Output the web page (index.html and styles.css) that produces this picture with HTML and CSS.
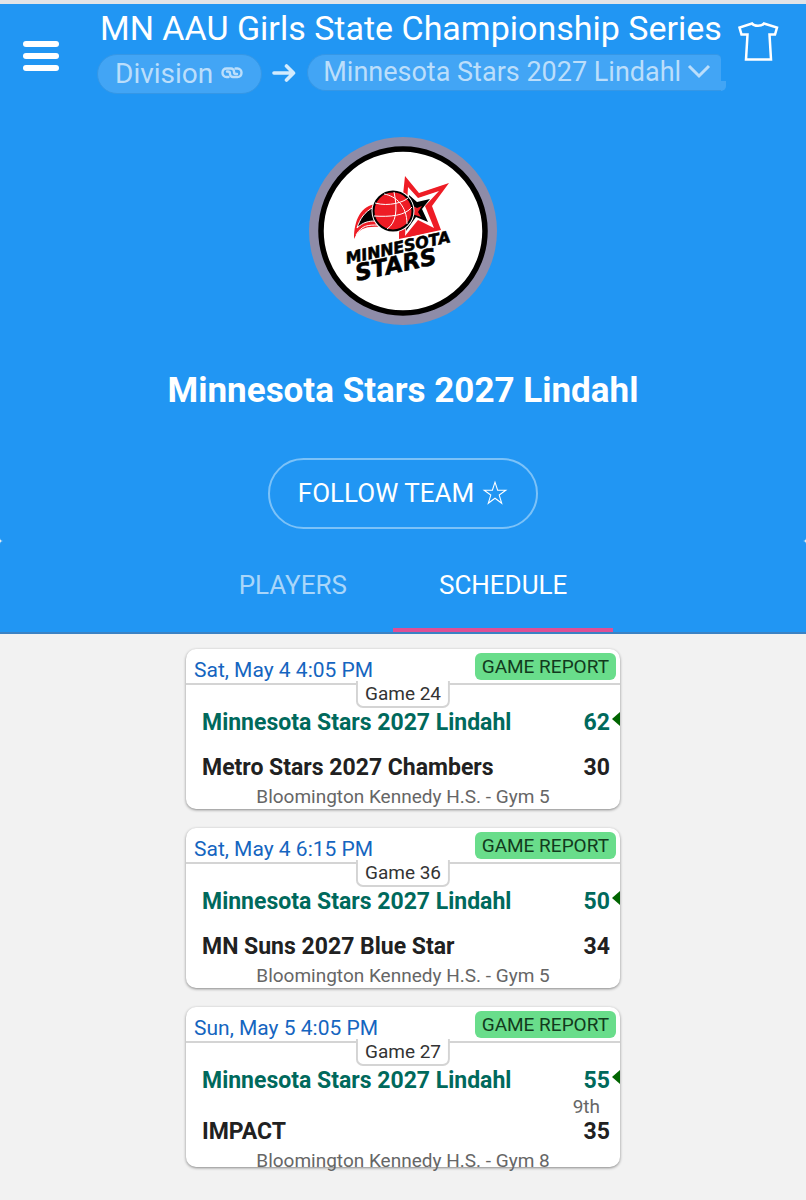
FILE: index.html
```html
<!DOCTYPE html>
<html lang="en">
	<head>
		<meta charset="UTF-8">
		<meta name="viewport" content="width=device-width, initial-scale=1">
		<title>Minnesota Stars 2027 Lindahl</title>
		<link rel="stylesheet" href="styles.css">
	</head>
	<body>
		<header class="hero">
			<div class="topbar">
				<button class="menu" type="button" aria-label="Menu"><span></span><span></span><span></span></button>
				<div class="heading">
					<div class="event">MN AAU Girls State Championship Series</div>
					<div class="crumbs">
						<a class="pill division" href="#">Division
							<svg width="22" height="14" viewBox="0 0 22 14" fill="none" stroke="currentColor" stroke-width="2.4" stroke-linecap="round"><path d="M7.500 11H5.500a4 4 0 0 1-4-4.200C1.500 3.800 3 2.500 5.500 2.500H10a3 3 0 0 1 3 3v0.500a2 2 0 0 0 2 2h1"/><path d="M14.500 2.500h2a4 4 0 0 1 4 4.200c0 2.800-1.500 4.300-4 4.300H12a3 3 0 0 1-3-3V7.500a2 2 0 0 0-2-2H6"/></svg>
						</a>
						<svg class="arrow" width="24" height="18" viewBox="0 0 24 18" fill="none" stroke="currentColor" stroke-width="3.600" stroke-linecap="round" stroke-linejoin="round"><path d="M2 9h19M14.500 2l7 7-7 7"/></svg>
						<div class="teampick">
							<select class="pill" aria-label="Team"><option>Minnesota Stars 2027 Lindahl</option></select>
							<svg class="chevron" width="24" height="16" viewBox="0 0 24 16" fill="none" stroke="currentColor" stroke-width="3"><path d="M2 3l10 10L22 3"/></svg>
						</div>
					</div>
				</div>
				<button class="shirt" type="button" aria-label="Team gear">
					<svg width="42" height="42" viewBox="0 0 42 42" fill="none" stroke="currentColor" stroke-width="2.500"><path d="M15 3.500C17 6.500 25 6.500 27 3.500L40 7.500 38 14.500H32.500L34 39.500H9L10.500 14.500H4.500L2.500 7.500Z"/></svg>
				</button>
			</div>
			<svg class="logo" width="188" height="188" viewBox="0 0 188 188" role="img" aria-label="Minnesota Stars logo">
				<circle cx="94" cy="94" r="94" fill="#8e8ca8"/>
				<circle cx="94" cy="94" r="82" fill="#fff" stroke="#000" stroke-width="5.500"/>
				<path d="M96 39L110 56 140 46 123 69 132 93 90 102V96Z" fill="#ee1c25"/>
				<path d="M99 50L109 61 130 54 116 69 125 91 109 83 96 99Z" fill="#fff"/>
				<path d="M100 58L108 65 121 62 113 72 119 85 107 80 97 94Z" fill="#000"/>
				<path d="M104 69L108 71 113 69 109 75 112 80 103 77Z" fill="#ee1c25"/>
				<path d="M99 100L109 87 124 94Z" fill="#ee1c25"/>
				<path d="M68 67C52 68 45 83 45 102C50 91 57 89 72 90Z" fill="#ee1c25"/>
				<path d="M65 70C55 75 51 82 48 91C54 85 60 84 66 84Z" fill="#000" stroke="#fff"/>
				<path d="M47 98C53 88 59 88 69 88" fill="none" stroke="#fff"/>
				<circle cx="84" cy="74" r="21.500" fill="#fff"/>
				<circle cx="84" cy="74" r="19.500" fill="#ee1c25" stroke="#000" stroke-width="2"/>
				<path d="M66 66C80 70 95 65 99 61M65 79C81 80 96 79 103 70M75 57C87 59 98 69 98 87M78 92C87 86 89 73 85 55" fill="none" stroke="#fff"/>
				<g fill="#000" stroke="#000" stroke-width=".6" font-family="'DejaVu Sans', sans-serif" font-weight="700" font-style="italic">
					<text x="38" y="127" font-size="16" transform="rotate(-12 38 127)">MINNESOTA</text>
					<text x="48" y="144" font-size="23" transform="rotate(-12 48 144)">STARS</text>
				</g>
			</svg>
			<h1 class="teamname">Minnesota Stars 2027 Lindahl</h1>
			<button class="follow" type="button">FOLLOW TEAM
				<svg width="26" height="26" viewBox="0 0 24 24" fill="none" stroke="currentColor" stroke-width="1"><path d="M12 2l2.400 7.400H22l-6.100 4.500 2.300 7.600-6.200-4.700-6.200 4.700 2.300-7.600L2 9.400h7.600z"/></svg>
			</button>
		</header>
		<nav class="tabs">
			<a class="tab" href="#">PLAYERS</a>
			<a class="tab active" href="#">SCHEDULE</a>
		</nav>
		<main class="games">
			<article class="game">
				<div class="gametop">
					<time>Sat, May 4 4:05 PM</time>
					<button class="report" type="button">GAME REPORT</button>
					<span class="number">Game 24</span>
				</div>
				<div class="row winner"><span>Minnesota Stars 2027 Lindahl</span><span>62</span></div>
				<div class="between"></div>
				<div class="row"><span>Metro Stars 2027 Chambers</span><span>30</span></div>
				<div class="venue">Bloomington Kennedy H.S. - Gym 5</div>
			</article>
			<article class="game">
				<div class="gametop">
					<time>Sat, May 4 6:15 PM</time>
					<button class="report" type="button">GAME REPORT</button>
					<span class="number">Game 36</span>
				</div>
				<div class="row winner"><span>Minnesota Stars 2027 Lindahl</span><span>50</span></div>
				<div class="between"></div>
				<div class="row"><span>MN Suns 2027 Blue Star</span><span>34</span></div>
				<div class="venue">Bloomington Kennedy H.S. - Gym 5</div>
			</article>
			<article class="game">
				<div class="gametop">
					<time>Sun, May 5 4:05 PM</time>
					<button class="report" type="button">GAME REPORT</button>
					<span class="number">Game 27</span>
				</div>
				<div class="row winner"><span>Minnesota Stars 2027 Lindahl</span><span>55</span></div>
				<div class="between place">9th</div>
				<div class="row"><span>IMPACT</span><span>35</span></div>
				<div class="venue">Bloomington Kennedy H.S. - Gym 8</div>
			</article>
		</main>
	</body>
</html>
```

FILE: styles.css
```css
*{box-sizing: border-box;}
body{margin: 0;background: #f2f2f2;font-family: Roboto, sans-serif;color: #212121;}
button,select{font-family: inherit;border: 0;padding: 0;background: none;color: inherit;}
a{color: inherit;text-decoration: none;}
svg{display: block;flex: none;}

.hero{
	display: flex;flex-direction: column;align-items: center;
	background: #2196f3;color: #fff;
	border-top: 4px solid #e2e4e7;
	border-radius: 0 0 3px 3px;
	padding-bottom: 12px;
}
.topbar{
	width: 100%;display: grid;grid-template-columns: 97px minmax(0, 1fr) 85px;
	padding-top: 4px;align-items: start;
}
.menu{display: grid;gap: 6px;width: 36px;margin: 33px 0 0 23px;}
.menu span{height: 6px;border-radius: 3px;background: #fff;}
.event{
	padding-left: 3px;font-size: 34px;line-height: 40px;
	white-space: nowrap;overflow: hidden;
}
.crumbs{display: flex;align-items: flex-start;margin-top: 6px;color: #bbdefb;}
.pill{
	background: #42a5f5;border: 1px solid #3597e6;color: #bbdefb;
	border-radius: 20px;
}
.division{
	display: flex;align-items: center;gap: 8px;height: 40px;
	padding: 0 18px 2px 17px;font-size: 28px;
}
.arrow{margin: 10px 11px 0 10px;color: #d3ebfd;}
.teampick{position: relative;flex: 1;min-width: 0;}
.teampick select{
	appearance: none;width: 100%;height: 37px;padding: 0 36px 2px 15px;
	font-size: 27px;border-radius: 20px 5px 0 20px;border-right: 0;
}
/* rounded end that sticks out under the select */
.teampick::after{
	content: "";position: absolute;left: 100%;bottom: 0;width: 5px;height: 10px;
	background: #42a5f5;border-radius: 0 0 10px 0;
}
.chevron{position: absolute;right: 10px;top: 9px;pointer-events: none;}
.shirt{margin: 12px 0 0 16px;width: 42px;}

.logo{margin-top: 43px;}
.teamname{margin: 45px 0 0;font-size: 35px;line-height: 42px;font-weight: 700;}
.follow{
	display: flex;align-items: center;gap: 8px;
	height: 71px;margin-top: 46px;padding: 0 28px 2px;
	border: 2px solid #7cc2f8;border-radius: 36px;font-size: 26px;
}

.tabs{
	display: flex;justify-content: center;height: 93px;
	background: #2196f3;border-bottom: 2px solid #3b82c4;border-radius: 3px 3px 0 0;
}
.tab{
	padding: 0 46px;font-size: 26px;line-height: 88px;color: #a9d6fa;
	border-bottom: 4px solid transparent;
}
.active{color: #fff;border-color: #df4f95;}

.games{display: grid;justify-content: center;gap: 19px;padding: 15px 0 32px;}
/* fixed height, a long card lets the venue run over its edge */
.game{
	width: 434px;max-width: 100%;height: 160px;background: #fff;
	border-radius: 10px;box-shadow: 0 1px 3px rgba(0,0,0,.45);
}
.gametop{
	position: relative;display: flex;justify-content: space-between;align-items: flex-start;
	height: 36px;padding: 4px 4px 0 8px;border-bottom: 2px solid #d4d4d4;
}
.gametop time{font-size: 21px;line-height: 34px;color: #1565c0;}
.report{
	height: 27px;padding: 0 7px;border-radius: 6px;
	background: #69dd8b;color: #123a1d;font-size: 19px;
}
.number{
	position: absolute;left: 50%;top: 32px;transform: translateX(-50%);
	height: 27px;padding: 0 7px;background: #fff;
	border: 2px solid #d4d4d4;border-top: 0;border-radius: 0 0 7px 7px;
	font-size: 19px;line-height: 25px;white-space: nowrap;color: #333;
}
.row{
	display: flex;justify-content: space-between;position: relative;
	padding: 0 10px 0 16px;font-size: 23px;line-height: 28px;font-weight: 700;
}
.winner{margin-top: 24px;color: #00695c;}
.winner::after{
	content: "";position: absolute;right: 0;top: 3px;
	border: 7px solid transparent;border-right: 8px solid #006400;border-left: 0;
}
.between{height: 17px;}
.place{
	height: 23px;padding-right: 20px;text-align: right;
	font-size: 19px;line-height: 23px;color: #666;
}
.venue{
	padding-top: 3px;text-align: center;
	font-size: 19px;line-height: 24px;color: #666;
}
```
